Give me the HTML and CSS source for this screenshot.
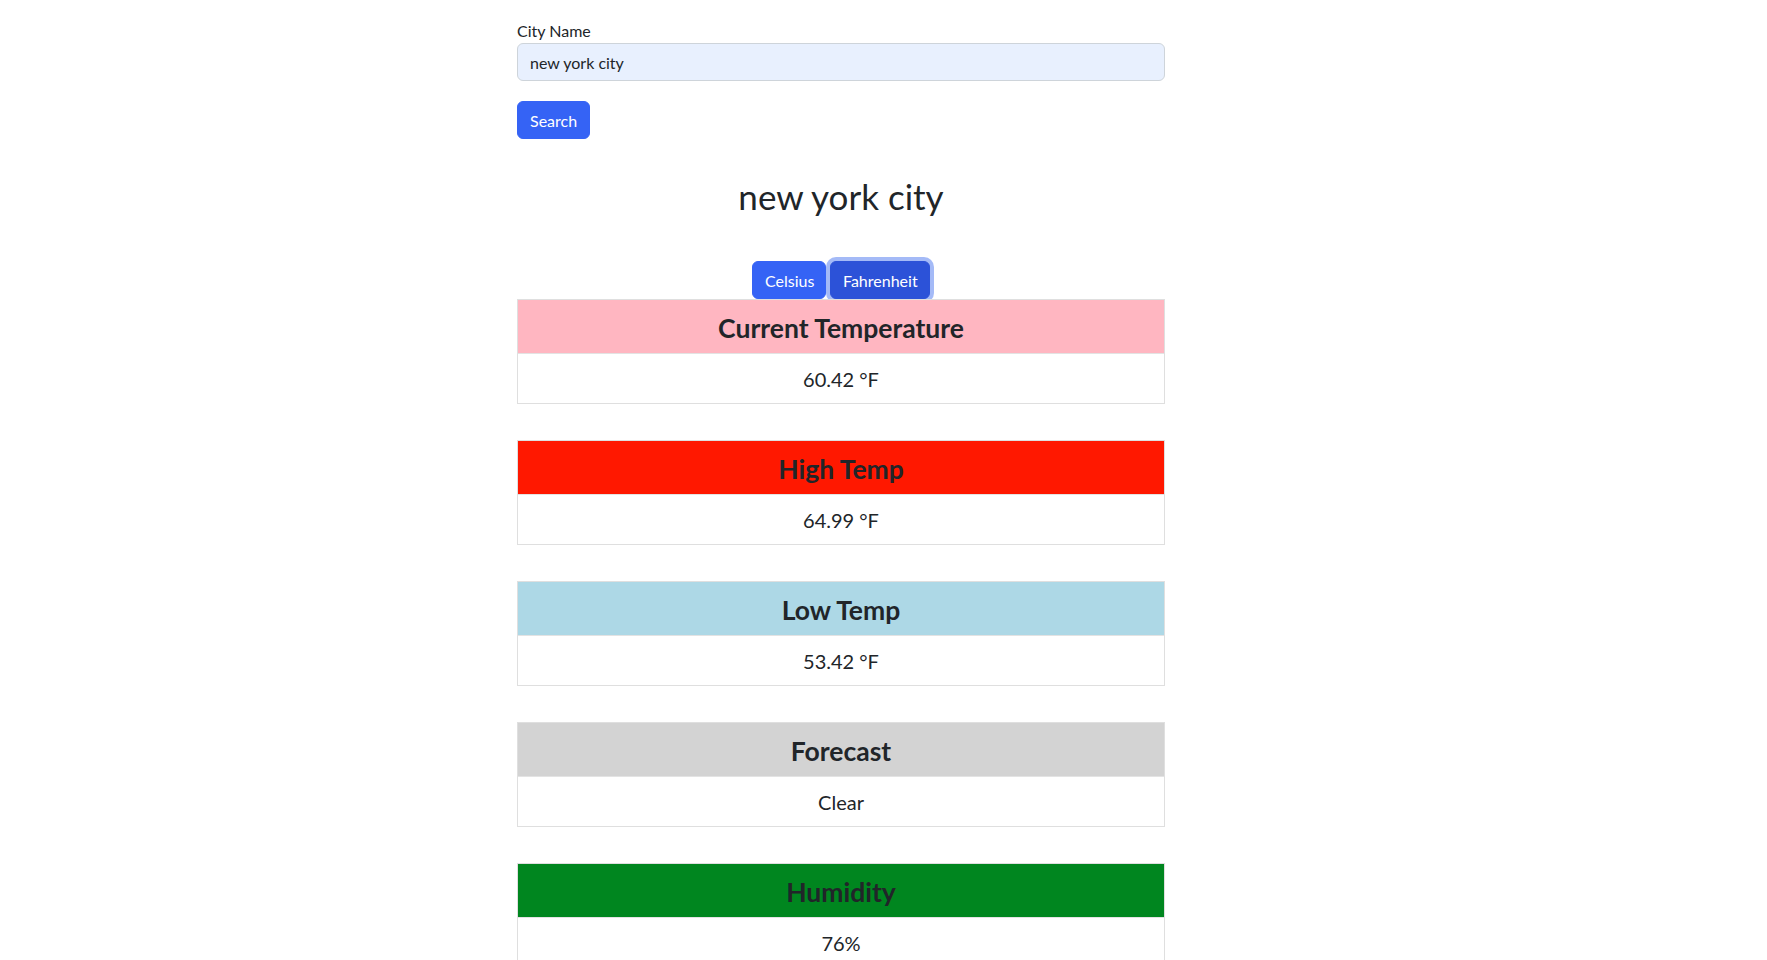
FILE: index.html
```html
<!DOCTYPE html>
<html lang="en">
<head>
<meta charset="utf-8">
<title>Weather</title>
<link rel="stylesheet" href="styles.css">
</head>
<body>
<div class="page">
  <form class="search-form">
    <label class="form-label" for="city">City Name</label>
    <input class="form-control" id="city" type="text" value="new york city">
    <button class="btn btn-primary search-btn" type="button">Search</button>
  </form>

  <h2 class="city-title">new york city</h2>

  <div class="unit-toggle">
    <button class="btn btn-primary" type="button">Celsius</button>
    <button class="btn btn-primary active" type="button">Fahrenheit</button>
  </div>

  <div class="cards">
    <div class="card">
      <div class="card-header pink"><h3>Current Temperature</h3></div>
      <div class="card-body">60.42 °F</div>
    </div>
    <div class="card">
      <div class="card-header red"><h3>High Temp</h3></div>
      <div class="card-body">64.99 °F</div>
    </div>
    <div class="card">
      <div class="card-header blue"><h3>Low Temp</h3></div>
      <div class="card-body">53.42 °F</div>
    </div>
    <div class="card">
      <div class="card-header gray"><h3>Forecast</h3></div>
      <div class="card-body">Clear</div>
    </div>
    <div class="card">
      <div class="card-header green"><h3>Humidity</h3></div>
      <div class="card-body">76%</div>
    </div>
  </div>
</div>
</body>
</html>
```

FILE: styles.css
```css
* { box-sizing: border-box; }

html, body {
  margin: 0;
  background: #fff;
}

body {
  font-family: "Lato", "Noto Sans", sans-serif;
  color: #212529;
}

.page {
  width: 648px;
  margin-left: 517px;
  padding-top: 19px;
}

.search-form {
  display: flex;
  flex-direction: column;
  align-items: flex-start;
}

.form-label {
  font-size: 16px;
  line-height: 24px;
}

.form-control {
  width: 100%;
  height: 38px;
  padding: 6px 12px;
  font-family: inherit;
  font-size: 16px;
  color: #212529;
  background: #e8f0fe;
  border: 1px solid #ced4da;
  border-radius: 6px;
  outline: none;
}

.btn {
  height: 38px;
  padding: 0 12px;
  font-family: inherit;
  font-size: 16px;
  color: #fff;
  background: #3563f5;
  border: 1px solid #3563f5;
  border-radius: 6px;
}

.search-btn {
  margin-top: 20px;
  width: 73px;
}

.city-title {
  margin: 36px 0 0;
  font-size: 35px;
  line-height: 42px;
  font-weight: 400;
  text-align: center;
}

.unit-toggle {
  display: flex;
  justify-content: center;
  gap: 4px;
  margin-top: 44px;
}

.unit-toggle .btn:first-child { width: 74px; }
.unit-toggle .btn.active {
  width: 100px;
  background: #2c52d8;
  border-color: #2c52d8;
  box-shadow: 0 0 0 4px rgba(90, 130, 240, 0.55);
}

.cards {
  display: flex;
  flex-direction: column;
  gap: 36px;
}

.card {
  border: 1px solid #dfdfdf;
  background: #fff;
}

.card-header {
  padding: 13px 16px 10px;
  border-bottom: 1px solid #e3e3e3;
  text-align: center;
}

.card-header h3 {
  margin: 0;
  font-size: 26.5px;
  line-height: 30px;
  font-weight: 700;
}

.card-body {
  padding: 10px 16px 9px;
  font-size: 20px;
  line-height: 30px;
  text-align: center;
}

.pink  { background: #ffb6c1; }
.red   { background: #ff1800; }
.blue  { background: #add8e6; }
.gray  { background: #d3d3d3; }
.green { background: #00861f; }
```
